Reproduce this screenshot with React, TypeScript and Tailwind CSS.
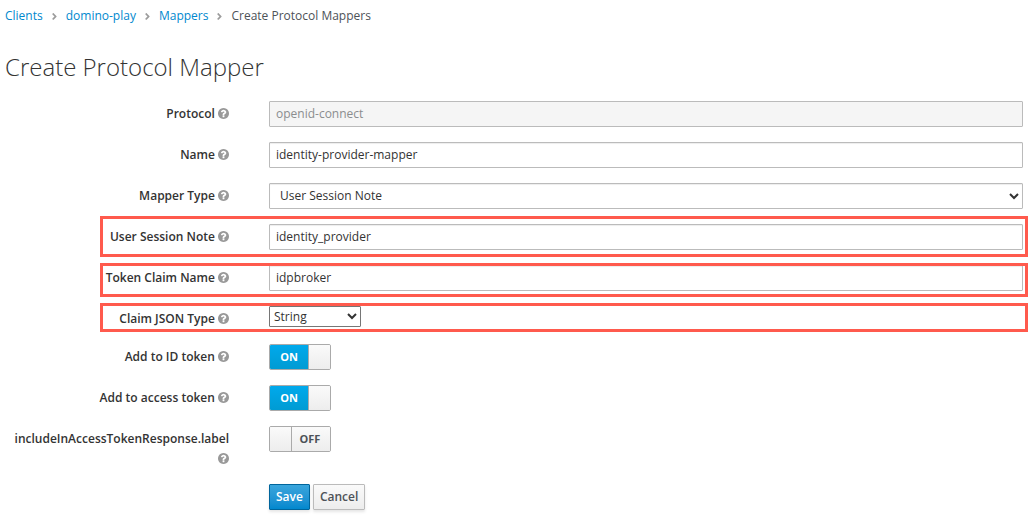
import { useState } from 'react'
import type { FormEvent, ReactNode } from 'react'
import { FaAngleRight } from 'react-icons/fa'
import { clsx } from 'clsx'

const crumbs = ['Clients', 'domino-play', 'Mappers']

const fieldClass =
  'block h-[26px] w-full rounded-[1px] border border-[#bbb] bg-white text-xs text-[#333] shadow-[inset_0_1px_1px_rgba(3,3,3,0.075)]'

function HelpIcon() {
  return (
    <svg
      viewBox="128 128 1536 1536"
      fill="currentColor"
      aria-hidden="true"
      className="inline size-[11px] align-[-1px] text-[#999]"
    >
      <path d="M1024 1376v-192q0-14-9-23t-23-9h-192q-14 0-23 9t-9 23v192q0 14 9 23t23 9h192q14 0 23-9t9-23zm256-672q0-88-55.5-163t-138.5-116-170-41q-243 0-371 213-15 24 8 42l132 100q7 6 19 6 16 0 25-12 53-68 86-92 34-24 86-24 48 0 85.5 26t37.5 59q0 38-20 61t-68 45q-63 28-115.5 86.5t-52.5 125.5v36q0 14 9 23t23 9h192q14 0 23-9t9-23q0-19 21.5-49.5t54.5-49.5q32-18 49-28.5t46-35 44.5-48 28-60.5 12.5-81zm384 192q0 209-103 385.5t-279.5 279.5-385.5 103-385.5-103-279.5-279.5-103-385.5 103-385.5 279.5-279.5 385.5-103 385.5 103 279.5 279.5 103 385.5z" />
    </svg>
  )
}

type RowProps = {
  id: string
  label: string
  // position of the red frame drawn around the row
  frame?: string
  children: ReactNode
}

function Row({ id, label, frame, children }: RowProps) {
  return (
    <div className="relative flex items-start gap-10">
      <label
        htmlFor={id}
        className="w-56 shrink-0 pt-[3px] text-right font-semibold leading-5"
      >
        {label} <HelpIcon />
      </label>
      <div className="min-w-0 flex-1">{children}</div>
      {frame && (
        <div
          className={clsx(
            'pointer-events-none absolute -right-[5px] left-[95px] border-3 border-[#ff5a4d]',
            frame,
          )}
        />
      )}
    </div>
  )
}

function Toggle({ id, initial }: { id: string; initial: boolean }) {
  const [on, setOn] = useState(initial)

  return (
    <label
      className={clsx(
        'relative flex h-[26px] w-[62px] cursor-pointer overflow-hidden rounded-[2px] border border-[#aaa] text-[11px] font-bold leading-6',
        !on && 'flex-row-reverse',
      )}
    >
      <input
        id={id}
        type="checkbox"
        checked={on}
        onChange={(e) => setOn(e.target.checked)}
        className="sr-only"
      />
      <span
        className={clsx(
          'flex-1 text-center',
          on
            ? 'bg-linear-to-b from-[#00a9ec] to-[#009bd3] text-white'
            : 'bg-linear-to-b from-[#fafafa] to-[#ededed] pr-[2px] text-[#4d5258]',
        )}
      >
        {on ? 'ON' : 'OFF'}
      </span>
      <span
        className={clsx(
          'w-[22px] border-[#aaa] bg-linear-to-b from-[#fafafa] to-[#ededed]',
          on ? 'border-l' : 'border-r',
        )}
      />
    </label>
  )
}

export default function App() {
  const [name, setName] = useState('identity-provider-mapper')
  const [note, setNote] = useState('identity_provider')
  const [claim, setClaim] = useState('idpbroker')

  const onSubmit = (e: FormEvent) => e.preventDefault()

  return (
    <main className="min-h-screen bg-white pl-[5px] pr-[9px] pt-[6px] font-['Open_Sans',sans-serif] text-xs text-[#333]">
      <nav aria-label="Breadcrumb">
        <ol className="flex items-center leading-5">
          {crumbs.map((crumb) => (
            <li key={crumb} className="flex items-center">
              <a href="#" className="text-[#0088ce] hover:underline">
                {crumb}
              </a>
              <FaAngleRight className="mx-[6px] size-[11px] text-[#9c9c9c]" />
            </li>
          ))}
          <li className="text-[#4d5258]">Create Protocol Mappers</li>
        </ol>
      </nav>

      <h1 className="mt-[25px] text-2xl font-light leading-8">
        Create Protocol Mapper
      </h1>

      <form onSubmit={onSubmit} className="mt-[18px] flex flex-col gap-[15px]">
        <Row id="protocol" label="Protocol">
          <input
            id="protocol"
            readOnly
            value="openid-connect"
            className="block h-[26px] w-full rounded-[1px] border border-[#bbb] bg-[#f5f5f5] px-[6px] pb-[2px] text-xs text-[#8b8d8f]"
          />
        </Row>
        <Row id="name" label="Name">
          <input
            id="name"
            value={name}
            onChange={(e) => setName(e.target.value)}
            className={clsx(fieldClass, 'px-[6px] pb-[2px]')}
          />
        </Row>
        <Row id="mapperType" label="Mapper Type">
          <select
            id="mapperType"
            className={clsx(fieldClass, 'pb-[2px] pl-[6px]')}
          >
            <option>User Session Note</option>
          </select>
        </Row>
        <Row
          id="sessionNote"
          label="User Session Note"
          frame="-top-[8px] -bottom-[7px]"
        >
          <input
            id="sessionNote"
            value={note}
            onChange={(e) => setNote(e.target.value)}
            className={clsx(fieldClass, 'px-[6px] pb-[2px]')}
          />
        </Row>
        <Row
          id="claimName"
          label="Token Claim Name"
          frame="-top-[2px] -bottom-[6px]"
        >
          <input
            id="claimName"
            value={claim}
            onChange={(e) => setClaim(e.target.value)}
            className={clsx(fieldClass, 'px-[6px] pb-[2px]')}
          />
        </Row>
        <Row
          id="jsonType"
          label="Claim JSON Type"
          frame="-top-[3px] -bottom-[3px]"
        >
          <select
            id="jsonType"
            className="block h-[21px] w-[92px] rounded-[1px] border border-[#767676] bg-white text-xs"
          >
            <option>String</option>
            <option>long</option>
            <option>int</option>
            <option>boolean</option>
            <option>JSON</option>
          </select>
        </Row>
        <Row id="idToken" label="Add to ID token">
          <Toggle id="idToken" initial={true} />
        </Row>
        <Row id="accessToken" label="Add to access token">
          <Toggle id="accessToken" initial={true} />
        </Row>
        <Row id="tokenResponse" label="includeInAccessTokenResponse.label">
          <Toggle id="tokenResponse" initial={false} />
        </Row>

        <div className="flex gap-[3px] pl-66">
          <button
            type="submit"
            className="h-[26px] rounded-[1px] border border-[#00659c] bg-linear-to-b from-[#39a5dc] to-[#0088ce] px-[6px] font-semibold text-white shadow-[0_2px_3px_rgba(3,3,3,0.1)]"
          >
            Save
          </button>
          <button
            type="button"
            className="h-[26px] rounded-[1px] border border-[#bbb] bg-linear-to-b from-[#fafafa] to-[#ededed] px-[6px] font-semibold text-[#4d5258] shadow-[0_2px_3px_rgba(3,3,3,0.1)]"
          >
            Cancel
          </button>
        </div>
      </form>
    </main>
  )
}
